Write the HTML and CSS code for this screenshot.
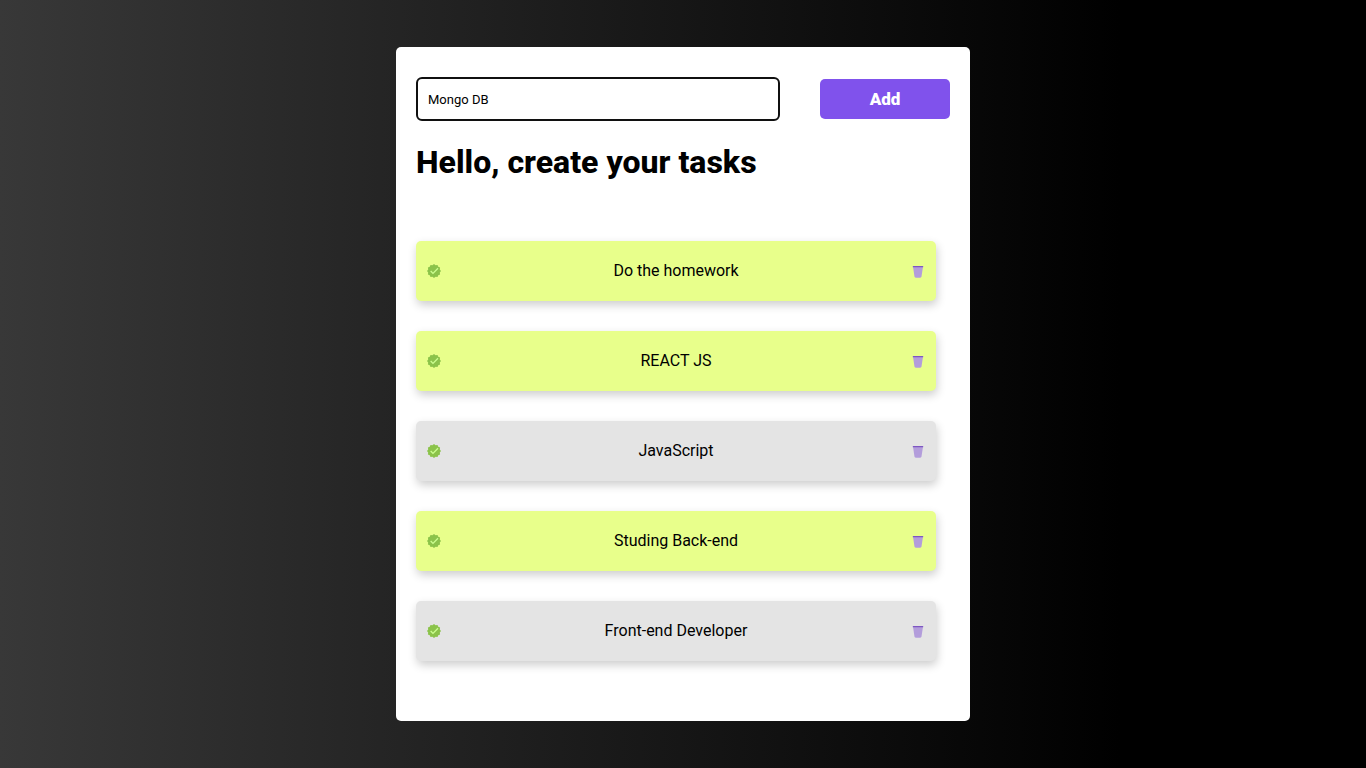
FILE: index.html
```html
<!DOCTYPE html>
<html lang="en">
<head>
<meta charset="utf-8">
<meta name="viewport" content="width=device-width, initial-scale=1">
<title>Tasks</title>
<link rel="stylesheet" href="styles.css">
</head>
<body>
<svg class="sprite" aria-hidden="true">
  <symbol id="check" viewBox="0 0 48 48">
    <path fill="#8bc34a" d="M24 3l4.700 3.600 5.800-.8 2.300 5.400 5.400 2.300-.8 5.800L45 24l-3.600 4.700.8 5.800-5.400 2.300-2.300 5.400-5.800-.8L24 45l-4.700-3.600-5.800.8-2.300-5.400-5.400-2.300.8-5.800L3 24l3.600-4.700-.8-5.800 5.400-2.300 2.300-5.400 5.800.8z"/>
    <path fill="#ccff90" d="M34.600 14.600L21 28.200l-5.600-5.600-2.800 2.800 8.400 8.400 16.400-16.400z"/>
  </symbol>
  <symbol id="trash" viewBox="0 0 48 48">
    <path fill="#b39ddb" d="M30.600 44H17.400c-2 0-3.700-1.400-4-3.400L9 11h30l-4.500 29.600c-.3 2-2 3.400-3.900 3.400z"/>
    <path fill="#7e57c2" d="M38 13H10c-1.100 0-2-.9-2-2s.9-2 2-2h28c1.100 0 2 .9 2 2s-.9 2-2 2z"/>
  </symbol>
</svg>
<main class="card">
  <form class="entry">
    <input class="entry-input" type="text" value="Mongo DB" aria-label="New task">
    <button class="entry-button" type="button">Add</button>
  </form>
  <h1 class="title">Hello, create your tasks</h1>
  <ul class="tasks">
    <li class="task done">
      <button class="icon-button" type="button" aria-label="Complete Do the homework"><svg class="icon"><use href="#check"/></svg></button>
      <span>Do the homework</span>
      <button class="icon-button" type="button" aria-label="Delete Do the homework"><svg class="icon"><use href="#trash"/></svg></button>
    </li>
    <li class="task done">
      <button class="icon-button" type="button" aria-label="Complete REACT JS"><svg class="icon"><use href="#check"/></svg></button>
      <span>REACT JS</span>
      <button class="icon-button" type="button" aria-label="Delete REACT JS"><svg class="icon"><use href="#trash"/></svg></button>
    </li>
    <li class="task">
      <button class="icon-button" type="button" aria-label="Complete JavaScript"><svg class="icon"><use href="#check"/></svg></button>
      <span>JavaScript</span>
      <button class="icon-button" type="button" aria-label="Delete JavaScript"><svg class="icon"><use href="#trash"/></svg></button>
    </li>
    <li class="task done">
      <button class="icon-button" type="button" aria-label="Complete Studing Back-end"><svg class="icon"><use href="#check"/></svg></button>
      <span>Studing Back-end</span>
      <button class="icon-button" type="button" aria-label="Delete Studing Back-end"><svg class="icon"><use href="#trash"/></svg></button>
    </li>
    <li class="task">
      <button class="icon-button" type="button" aria-label="Complete Front-end Developer"><svg class="icon"><use href="#check"/></svg></button>
      <span>Front-end Developer</span>
      <button class="icon-button" type="button" aria-label="Delete Front-end Developer"><svg class="icon"><use href="#trash"/></svg></button>
    </li>
  </ul>
</main>
</body>
</html>
```
FILE: styles.css
```css
* {
  margin: 0;
  padding: 0;
  box-sizing: border-box;
}

body {
  min-height: 100vh;
  display: flex;
  align-items: center;
  justify-content: center;
  font-family: Roboto, sans-serif;
  font-size: 16px;
  line-height: 18px;
  color: #000;
  background: linear-gradient(90deg, #383838 0%, #000 82%);
}

.sprite {
  display: none;
}

.card {
  width: 100%;
  max-width: 574px;
  padding: 30px 20px 60px;
  border-radius: 5px;
  background: #fff;
}

.entry {
  display: flex;
  align-items: center;
  gap: 40px;
}

.entry-input {
  flex: 1;
  min-width: 0;
  height: 44px;
  padding: 0 10px;
  border: 2px solid #101010;
  border-radius: 6px;
  outline: none;
  background: #fff;
  font-family: inherit;
  font-size: 13px;
  color: #000;
}

.entry-button {
  width: 130px;
  height: 40px;
  border: none;
  border-radius: 5px;
  background: #8052ec;
  color: #fff;
  font-family: inherit;
  font-size: 17px;
  font-weight: 900;
  line-height: 18px;
  cursor: pointer;
}

.title {
  margin: 22px 0 60px;
  font-size: 32px;
  font-weight: 800;
  line-height: 38px;
}

.tasks {
  display: flex;
  flex-direction: column;
  gap: 30px;
  margin-right: 14px;
  list-style: none;
}

.task {
  display: flex;
  align-items: center;
  justify-content: space-between;
  height: 60px;
  padding: 0 10px;
  border-radius: 5px;
  background: #e4e4e4;
  box-shadow: 1px 4px 10px rgba(0, 0, 0, 0.2);
}

.done {
  background: #e8ff8b;
}

.icon-button {
  display: flex;
  border: none;
  background: none;
  cursor: pointer;
}

.icon {
  width: 16px;
  height: 16px;
}
```
